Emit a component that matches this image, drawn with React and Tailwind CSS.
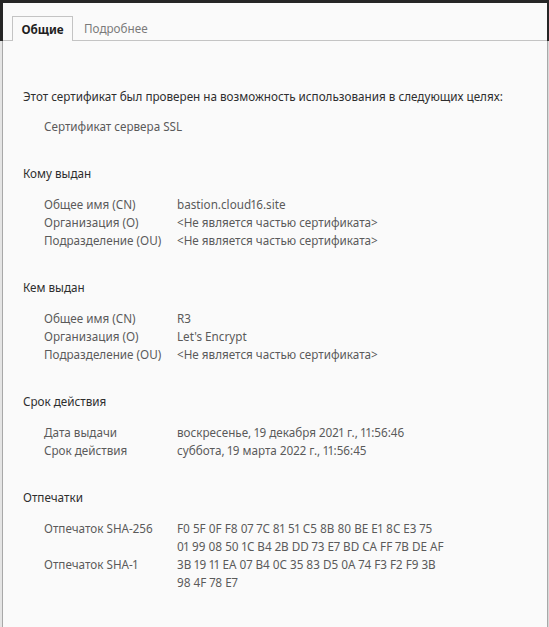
import React from 'react';

const sections = [
  {
    title: 'Кому выдан',
    rows: [
      ['Общее имя (CN)', 'bastion.cloud16.site'],
      ['Организация (O)', '<Не является частью сертификата>'],
      ['Подразделение (OU)', '<Не является частью сертификата>'],
    ],
  },
  {
    title: 'Кем выдан',
    rows: [
      ['Общее имя (CN)', 'R3'],
      ['Организация (O)', "Let's Encrypt"],
      ['Подразделение (OU)', '<Не является частью сертификата>'],
    ],
  },
  {
    title: 'Срок действия',
    rows: [
      ['Дата выдачи', 'воскресенье, 19 декабря 2021 г., 11:56:46'],
      ['Срок действия', 'суббота, 19 марта 2022 г., 11:56:45'],
    ],
  },
  {
    title: 'Отпечатки',
    rows: [
      ['Отпечаток SHA-256', ['F0 5F 0F F8 07 7C 81 51 C5 8B 80 BE E1 8C E3 75', '01 99 08 50 1C B4 2B DD 73 E7 BD CA FF 7B DE AF']],
      ['Отпечаток SHA-1', ['3B 19 11 EA 07 B4 0C 35 83 D5 0A 74 F3 F2 F9 3B', '98 4F 78 E7']],
    ],
  },
];

const Section = ({ title, rows }) => (
  <div className="mt-[29px]">
    <div className="h-[18px] text-[#2e2e2e]">{title}</div>
    <div className="mt-[13px] pl-[21px]">
      {rows.map(([label, value]) => (
        <div key={label} className="flex">
          <div className="w-[133px] shrink-0 h-[18px] text-[#5a5a5a]">{label}</div>
          <div className="text-[#5a5a5a]">
            {(Array.isArray(value) ? value : [value]).map((v) => (
              <div key={v} className="h-[18px] whitespace-nowrap">{v}</div>
            ))}
          </div>
        </div>
      ))}
    </div>
  </div>
);

export default function App() {
  return (
    <div
      className="w-[549px] h-[627px] flex flex-col bg-[#2b2b2b] overflow-hidden text-[11.7px] leading-[18px] proportional-nums"
      style={{ fontFamily: '"Noto Sans", "Open Sans", sans-serif' }}
    >
      <div className="h-[3px] shrink-0 bg-[#262626]" />
      <div className="flex flex-1 min-h-0">
        <div className="w-[3px] shrink-0 flex flex-col">
          <div className="h-[38px] bg-[#262626]" />
          <div className="flex-1 bg-[#e4e4e4] border-r border-[#a8a8a8]" />
        </div>
        <div className="flex-1 bg-[#fafafa] flex flex-col">
          <div className="h-[38px] shrink-0 border-b border-[#c4c4c4] flex items-end pl-[9px]">
            <div className="h-[25px] w-[61px] -mb-px bg-[#fafafa] border border-b-0 border-[#c4c4c4] flex items-center justify-center font-bold text-[#1e1e1e]">
              Общие
            </div>
            <div className="h-[24px] pl-[11px] flex items-center text-[#7a7a7a]">Подробнее</div>
          </div>
          <div className="pl-[20px] pt-[46px]">
            <div className="h-[18px] text-[#2e2e2e]">
              Этот сертификат был проверен на возможность использования в следующих целях:
            </div>
            <div className="mt-[12px] pl-[21px] h-[18px] text-[#5a5a5a]">Сертификат сервера SSL</div>
            {sections.map((s) => (
              <Section key={s.title} {...s} />
            ))}
          </div>
        </div>
        <div className="w-[2px] shrink-0 flex flex-col">
          <div className="h-[38px] bg-[#262626]" />
          <div className="flex-1 bg-[#d8d8d8] border-l border-[#a8a8a8]" />
        </div>
      </div>
    </div>
  );
}
